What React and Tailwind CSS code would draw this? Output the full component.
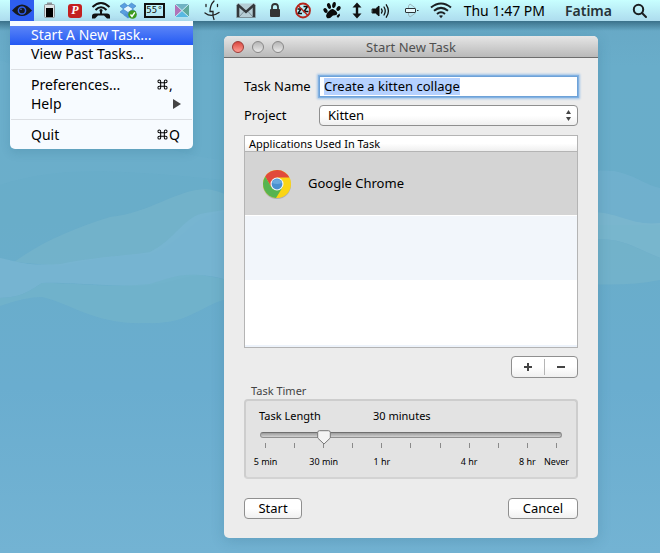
import React, { useState } from 'react'

const apps = ['Google Chrome']

const stops = [
    { tick: '5 min', text: '5 minutes' },
    { text: '15 minutes' },
    { tick: '30 min', text: '30 minutes' },
    { text: '45 minutes' },
    { tick: '1 hr', text: '1 hour' },
    { text: '2 hours' },
    { text: '3 hours' },
    { tick: '4 hr', text: '4 hours' },
    { text: '6 hours' },
    { tick: '8 hr', text: '8 hours' },
    { tick: 'Never', text: 'Never' },
]

const Wallpaper = () => (
    <svg className="absolute inset-0 -z-10 h-full w-full" viewBox="0 0 660 553" preserveAspectRatio="none" aria-hidden="true">
        <defs>
            <linearGradient id="sea" x1="0" y1="0" x2="0" y2="1">
                <stop offset="0" stopColor="#67a6c3" />
                <stop offset="0.12" stopColor="#69adca" />
                <stop offset="0.4" stopColor="#69adc9" />
                <stop offset="0.7" stopColor="#6aadcf" />
                <stop offset="1" stopColor="#73b3d3" />
            </linearGradient>
            <linearGradient id="barShadow" x1="0" y1="0" x2="0" y2="1">
                <stop offset="0" stopColor="#1d4d63" stopOpacity="0.6" />
                <stop offset="1" stopColor="#1d4d63" stopOpacity="0" />
            </linearGradient>
        </defs>
        <rect width="660" height="553" fill="url(#sea)" />
        {/* left of the window */}
        <path d="M14 262 C45 240 75 228 110 217 C150 213 175 190 206 189 Q216 190 230 196 L230 212 C190 212 190 240 150 254 C110 256 95 259 60 266 Z" fill="#76b3ca" opacity="0.7" />
        <path d="M0 258 C20 262 25 266 60 264 C100 256 125 256 150 252 C175 240 185 215 205 213 L230 209 L230 281 C185 266 180 287 130 286 C90 285 60 282 42 283 C25 294 20 297 0 298 Z" fill="#78b5d1" opacity="0.9" />
        <path d="M42 283 C80 283 110 288 150 284 C175 277 185 269 230 281 L230 298 C200 305 190 325 145 323 C95 325 70 303 42 297 Q25 297 0 306 L0 298 C20 297 25 294 42 283 Z" fill="#71b2cb" opacity="0.9" />
        <path d="M0 60 C60 80 120 150 224 160 L224 180 C120 170 60 165 0 185 Z" fill="#74b2d2" opacity="0.2" />
        {/* right of the window */}
        <path d="M590 172 C625 165 640 184 660 188 L660 225 L590 225 Z" fill="#74b3d0" opacity="0.6" />
        <path d="M590 212 C620 212 630 226 660 223 L660 258 C635 248 620 236 590 240 Z" fill="#7fb9cf" opacity="0.7" />
        <path d="M590 240 C620 236 635 248 660 258 L660 280 Q630 286 590 284 Z" fill="#76b3cb" opacity="0.7" />
        <rect y="21" width="660" height="10" fill="url(#barShadow)" />
    </svg>
)

const MenuIcons = () => (
    <div className="flex h-[21px] items-center">
        <button type="button" aria-label="Task menu" className="h-[21px] w-6 bg-[#2e5ef0]">
            <svg viewBox="0 0 24 21" className="h-[21px] w-6">
                <path d="M2 10.500 Q12 -1.500 22 10.500 Q12 21.500 2 10.500Z" fill="#16191f" />
                <circle cx="12" cy="10.500" r="3.600" fill="#16191f" stroke="#2e5ef0" strokeWidth="1.500" />
                <circle cx="11" cy="9.300" r="0.700" fill="#5f85f3" />
            </svg>
        </button>
        {/* battery */}
        <svg viewBox="0 0 31 21" className="h-[21px] w-[31px]">
            <rect x="13" y="2.500" width="5" height="2" fill="#8b9296" />
            <rect x="10.500" y="4.500" width="10" height="13" rx="1" fill="#dfe5e6" stroke="#8b9296" />
            <rect x="12" y="8" width="7" height="9" fill="#000" />
        </svg>
        <div className="flex w-5 justify-center">
            <span className="h-[14px] w-[14px] rounded-[3px] bg-[#c3201f] text-center font-['Liberation_Serif'] text-xs leading-[13px] font-bold text-white italic">P</span>
        </div>
        {/* broadcast */}
        <svg viewBox="0 0 32 21" className="h-[21px] w-8" fill="none" stroke="#111" strokeWidth="2">
            <path d="M7.500 7 Q16 -1 24.500 7" />
            <path d="M10.500 10 Q16 4.500 21.500 10" />
            <circle cx="16" cy="10.500" r="1.500" fill="#111" stroke="none" />
            <path d="M7 18.500V16Q7 13.500 10 13.500H22Q25 13.500 25 16V18.500H22L19 15.500H13L10 18.500Z" fill="#111" stroke="none" />
            <path d="M15 11H17V14H15Z" fill="#111" stroke="none" />
        </svg>
        {/* dropbox */}
        <svg viewBox="0 0 22 21" className="h-[21px] w-[22px]">
            <path d="M3 6 L7.500 3 L11 6 L6.500 9Z M11 6 L14.500 3 L19 6 L15.500 9Z M3 12 L6.500 9 L11 12 L7.500 15Z M11 12 L15.500 9 L19 12 L14.500 15Z" fill="#5a9fe0" stroke="#2f6fb5" strokeWidth="0.500" />
            <path d="M11 6 L15.500 9 L11 12 L6.500 9Z" fill="#e8f7ff" />
            <path d="M6.500 15 L11 12.500 L15.500 15 L11 18.500Z" fill="#4f93d6" />
            <circle cx="15.500" cy="14.500" r="4.300" fill="#3e9b1d" />
            <path d="M13.500 14.500 L15 16.500 L17.800 12.300" fill="none" stroke="#fff" strokeWidth="1.400" />
        </svg>
        <div className="flex w-[31px] justify-center">
            <span className="flex h-[15px] w-[21px] items-center justify-center border-2 border-[#111] font-['DejaVu_Sans_Mono'] text-[9px] leading-[11px] text-[#111]">55°</span>
        </div>
        {/* colour square */}
        <svg viewBox="0 0 24 21" className="h-[21px] w-6">
            <path d="M5 4H19L12 11Z" fill="#6fb3c4" />
            <path d="M5 4L12 11L5 17Z" fill="#b073b8" />
            <path d="M19 4V17L12 11Z" fill="#5fa99b" />
            <path d="M5 17L12 11L19 17Z" fill="#58b8e2" />
            <path d="M5 4L19 17M19 4L5 17" stroke="#c8e9f2" strokeWidth="1" />
        </svg>
        {/* smiling face */}
        <svg viewBox="0 0 36 21" className="h-[21px] w-9" fill="none" stroke="#222" strokeWidth="1.300" strokeLinecap="round">
            <path d="M20 1 Q16 5 16 11.500 H19 Q18.500 16 20 19.500" />
            <path d="M12 4.500V6.500M23.500 4.500V6.500" />
            <path d="M11 13 Q17.500 18 25 12.500" />
        </svg>
        {/* mail */}
        <svg viewBox="0 0 32 21" className="h-[21px] w-8">
            <path d="M6.500 3.500H25.500V17.500H6.500Z" fill="#b5cdd5" />
            <path d="M9 17L14 11.500M23 17L18 11.500" stroke="#7d9199" />
            <path d="M8 17.500V5" stroke="#33383b" strokeWidth="2.600" />
            <path d="M24 17.500V5" stroke="#33383b" strokeWidth="2.600" />
            <path d="M7.500 4.500L16 12L24.500 4.500" fill="none" stroke="#33383b" strokeWidth="2.400" />
            <path d="M6.500 17.500H25.500" stroke="#7d9199" />
        </svg>
        {/* lock */}
        <svg viewBox="0 0 27 21" className="h-[21px] w-[27px]">
            <path d="M10 10V7Q10 4 13 4Q16 4 16 7V10" fill="none" stroke="#333" strokeWidth="1.800" />
            <rect x="8" y="9" width="10" height="8" rx="1" fill="#333" />
        </svg>
        {/* no sleep */}
        <svg viewBox="0 0 28 21" className="h-[21px] w-7">
            <path d="M8.500 9H12L9 13.500H13M14.500 6.500H18.500L15 11.500H19.500" fill="none" stroke="#111" strokeWidth="1.500" />
            <circle cx="14" cy="10.500" r="7" fill="none" stroke="#b5251c" strokeWidth="1.800" />
            <path d="M9 5.500L19 15.500" stroke="#b5251c" strokeWidth="1.500" />
        </svg>
        {/* paw */}
        <svg viewBox="0 0 30 21" className="h-[21px] w-[30px]" fill="#0a0a0a">
            <path d="M9 16Q9 13 12 11Q15 7.500 17.500 10Q21 12 20 14.500Q18.500 15.500 16 15.500Q13 19 10 18Z" />
            <ellipse cx="8.500" cy="10.500" rx="1.800" ry="2.600" transform="rotate(-40 8.500 10.500)" />
            <ellipse cx="12" cy="6" rx="1.800" ry="3" transform="rotate(-20 12 6)" />
            <ellipse cx="17" cy="5" rx="1.800" ry="3" transform="rotate(10 17 5)" />
            <ellipse cx="21.500" cy="8.500" rx="1.800" ry="2.700" transform="rotate(40 21.500 8.500)" />
            <path d="M19.500 16L22.500 13.500L23 15.500L21 18Z" />
        </svg>
        {/* up and down */}
        <svg viewBox="0 0 20 21" className="h-[21px] w-5" fill="#111">
            <path d="M10 2.500L14.500 7.500H11.200V13.500H14.500L10 18.500L5.500 13.500H8.800V7.500H5.500Z" />
        </svg>
        {/* volume */}
        <svg viewBox="0 0 28 21" className="h-[21px] w-7" fill="none" stroke="#111" strokeWidth="1.300" strokeLinecap="round">
            <path d="M5.500 9H8.500L12 6V16L8.500 13H5.500Z" fill="#111" strokeWidth="1" />
            <path d="M14.500 9Q16 11 14.500 13M17 7Q19.500 11 17 15M19.300 4.800Q23.500 11 19.300 17.200" />
        </svg>
        {/* router */}
        <svg viewBox="0 0 32 21" className="h-[21px] w-8" fill="none">
            <path d="M13.500 8V6L15 4L20.500 8M13.500 13V15L15 17L20.500 13" stroke="#9db7bf" />
            <rect x="10.500" y="8.500" width="10" height="4" rx="0.500" fill="#e5f8fc" stroke="#2c3336" />
            <path d="M22 10.500H23.500" stroke="#2c3336" />
        </svg>
        {/* wifi */}
        <svg viewBox="0 0 28 21" className="h-[21px] w-7" fill="none" stroke="#1b1f21" strokeWidth="2">
            <path d="M4 7.500Q14 -.5 24 7.500M7 10.800Q14 5 21 10.800M10 14Q14 10.500 18 14" />
            <path d="M12 15.800L14 18.300L16 15.800Q14 14.500 12 15.800Z" fill="#1b1f21" stroke="none" />
        </svg>
    </div>
)

const MenuBar = () => (
    <header className="flex h-[21px] items-center justify-between overflow-hidden bg-linear-to-b from-[#c8ffff] to-[#addcee] pr-3 pl-[10px] text-sm whitespace-nowrap">
        <MenuIcons />
        <div className="flex items-center gap-5">
            <time>Thu 1:47 PM</time>
            <span className="font-semibold text-[#263238]">Fatima</span>
            <button type="button" aria-label="Search">
                <svg viewBox="0 0 16 16" className="h-4 w-4" fill="none" stroke="#1b1f21" strokeWidth="2" strokeLinecap="round">
                    <circle cx="6.500" cy="6.500" r="4.700" />
                    <path d="M10 10L14 14" />
                </svg>
            </button>
        </div>
    </header>
)

const MenuItem = ({ label, shortcut, submenu, active }) => (
    <li>
        <button
            type="button"
            className={
                active
                    ? 'flex h-[19px] w-full items-center justify-between bg-linear-to-b from-[#5b84f7] to-[#2358f3] pr-3 pb-[2px] pl-[21px] text-white'
                    : 'flex h-[19px] w-full items-center justify-between pr-3 pb-[2px] pl-[21px]'
            }
        >
            <span>{label}</span>
            {shortcut && (
                <span className="flex w-6 items-center">
                    <svg viewBox="0 0 12 12" className="mr-px h-[11px] w-[11px]" fill="none" stroke="currentColor" strokeWidth="1.100">
                        <path d="M4 4H8V8H4ZM4 4H2.500A1.500 1.500 0 1 1 4 2.500ZM8 4V2.500A1.500 1.500 0 1 1 9.500 4ZM8 8H9.500A1.500 1.500 0 1 1 8 9.500ZM4 8V9.500A1.500 1.500 0 1 1 2.500 8Z" />
                    </svg>
                    {shortcut}
                </span>
            )}
            {submenu && (
                <svg viewBox="0 0 8 10" className="h-[10px] w-2" fill="#444">
                    <path d="M0 0L8 5L0 10Z" />
                </svg>
            )}
        </button>
    </li>
)

const Separator = () => (
    <li className="flex h-3 items-start px-px pt-[5px]">
        <hr className="w-full border-[#dcdfe3]" />
    </li>
)

const TaskMenu = () => (
    <ul className="w-[183px] shrink-0 rounded-b-[5px] bg-[#f7fbff] pt-[5px] pb-1 text-sm leading-[19px] shadow-[0_4px_10px_rgba(30,80,110,0.15)]">
        <MenuItem label="Start A New Task..." active />
        <MenuItem label="View Past Tasks..." />
        <Separator />
        <MenuItem label="Preferences..." shortcut="," />
        <MenuItem label="Help" submenu />
        <Separator />
        <MenuItem label="Quit" shortcut="Q" />
    </ul>
)

const ChromeLogo = () => (
    <svg viewBox="0 0 30 30" className="h-[30px] w-[30px]">
        <ellipse cx="15" cy="16" rx="14" ry="14" fill="#8a8a8a" opacity="0.500" />
        <circle cx="15" cy="15" r="14" fill="#fbd514" />
        <path d="M15 8.500H27.400A14 14 0 0 0 3.200 7.500L9.400 18.250Z" fill="#e14a3b" />
        <path d="M3.200 7.500A14 14 0 0 0 14 28.960L20.600 18.250L9.400 18.250Z" fill="#56b450" />
        <circle cx="15" cy="15" r="6.500" fill="#f3f7f8" />
        <circle cx="15" cy="15" r="5.400" fill="#4a90cf" />
        <path d="M10 14A5.200 5.200 0 0 1 20 14Q15 16 10 14Z" fill="#6aa9de" />
    </svg>
)

const TitleBar = () => (
    <div className="grid h-[22px] grid-cols-[1fr_auto_1fr] items-center rounded-t-[5px] border-b border-[#6d6d6d] bg-linear-to-b from-[#e6e6e6] to-[#b9b9b9] px-2">
        <div className="flex gap-2">
            <button type="button" aria-label="Close" className="h-3 w-3 rounded-full border border-[#9b3a36] bg-linear-to-b from-[#d8453f] to-[#ff9d94]" />
            <button type="button" aria-label="Minimize" className="h-3 w-3 rounded-full border border-[#888] bg-linear-to-b from-[#b5b5b5] to-[#e9e9e9]" />
            <button type="button" aria-label="Zoom" className="h-3 w-3 rounded-full border border-[#888] bg-linear-to-b from-[#b5b5b5] to-[#e9e9e9]" />
        </div>
        <h1 className="text-[13px] leading-5 text-[#505050]">Start New Task</h1>
    </div>
)

const AppTable = () => (
    <div className="mt-[9px] h-[213px] border border-[#b4b4b4] bg-white">
        <table className="w-full border-separate border-spacing-0 text-left">
            <thead>
                <tr>
                    <th className="h-4 border-b border-[#b4b4b4] bg-linear-to-b from-white from-50% to-[#efefef] p-0 pl-1 text-[11px] leading-[15px] font-normal">
                        Applications Used In Task
                    </th>
                </tr>
            </thead>
            <tbody>
                {apps.map((app) => (
                    <tr key={app} className="bg-[#d4d4d4]">
                        <td className="h-[63px] p-0 pl-[17px]">
                            <div className="flex items-center gap-4 text-[13px]">
                                <ChromeLogo />
                                {app}
                            </div>
                        </td>
                    </tr>
                ))}
                <tr className="bg-[#f2f6fb]">
                    <td className="h-[65px] border-t border-white p-0" />
                </tr>
                <tr className="bg-white">
                    <td className="h-[65px] p-0" />
                </tr>
                <tr className="bg-[#edf3fb]">
                    <td className="h-[2px] p-0" />
                </tr>
            </tbody>
        </table>
    </div>
)

const TaskTimer = () => {
    const [step, setStep] = useState(2)

    return (
        <section className="mt-1">
            <h2 className="pl-[7px] text-[11px] leading-[17px] text-[#444]">Task Timer</h2>
            <div className="h-20 rounded-[4px] border-2 border-[#cdcdcd] border-b-[#d3d3d3] bg-[#e3e3e3] pt-[6px]">
                <div className="grid grid-cols-[114px_1fr] px-[13px] text-[11px] leading-[17px]">
                    <label htmlFor="length">Task Length</label>
                    <output htmlFor="length">{stops[step].text}</output>
                </div>
                <div className="relative mx-[14px] mt-2 h-[6px] rounded-full border border-[#909090] border-t-[#6f6f6f] bg-linear-to-b from-[#9c9c9c] to-[#d2d2d2]">
                    <div className="absolute inset-x-[5px] -top-[3px]">
                        <svg
                            viewBox="0 0 14 15"
                            className="absolute h-[15px] w-[14px] -translate-x-1/2"
                            style={{ left: `${(step / (stops.length - 1)) * 100}%` }}
                        >
                            <path d="M2.500 0.700H11.500Q13.300 0.700 13.300 2.500V8L7 14L0.700 8V2.500Q0.700 0.700 2.500 0.700Z" fill="#f4f4f4" stroke="#777" />
                        </svg>
                    </div>
                    <input
                        id="length"
                        type="range"
                        min="0"
                        max={stops.length - 1}
                        value={step}
                        onChange={(e) => setStep(Number(e.target.value))}
                        className="absolute inset-x-0 -top-1 h-4 w-full opacity-0"
                    />
                </div>
                <div className="mt-[5px] grid grid-cols-11 px-[5px]">
                    {stops.map((stop) => (
                        <div key={stop.text} className="flex flex-col items-center">
                            <span className="h-[5px] w-px bg-[#8a8a8a]" />
                            <span className="mt-[5px] w-0 text-[9px] leading-[18px]">
                                <span className="flex justify-center whitespace-nowrap">{stop.tick}</span>
                            </span>
                        </div>
                    ))}
                </div>
            </div>
        </section>
    )
}

const TaskWindow = () => (
    <main className="mt-[15px] min-w-0 flex-1 rounded-[5px] bg-[#ececec] shadow-[0_3px_14px_rgba(30,80,110,0.2)]">
        <TitleBar />
        <form className="px-5 pt-[18px] pb-[19px]" onSubmit={(e) => e.preventDefault()}>
            <div className="grid grid-cols-[75px_1fr] items-center gap-y-2 text-[13px]">
                <label htmlFor="name">Task Name</label>
                <div className="flex h-[21px] items-center border border-[#6ea2d8] bg-white shadow-[0_0_0_1px_#83b2e2,0_0_2px_2px_#a0c4e8]">
                    <input
                        id="name"
                        defaultValue="Create a kitten collage"
                        className="ml-1 field-sizing-content h-[17px] max-w-full bg-[#b5d1ff] outline-none"
                    />
                </div>
                <label htmlFor="project">Project</label>
                <div className="relative">
                    <select
                        id="project"
                        className="block h-[21px] w-full appearance-none rounded-[4px] border border-[#8f8f8f] bg-linear-to-b from-white from-50% to-[#f0f0f0] pl-2 leading-[19px]"
                    >
                        <option>Kitten</option>
                    </select>
                    <svg viewBox="0 0 5 11" className="pointer-events-none absolute top-[5px] right-[7px] h-[11px] w-[5px]" fill="#444">
                        <path d="M2.500 0L5 4H0ZM2.500 11L5 7H0Z" />
                    </svg>
                </div>
            </div>
            <AppTable />
            <div className="mt-2 flex justify-end">
                <div className="flex h-[22px] w-[67px] items-center divide-x divide-[#b5b5b5] rounded-[4px] border border-[#8f8f8f] bg-linear-to-b from-white from-50% to-[#f0f0f0]">
                    <button type="button" aria-label="Add" className="flex h-4 flex-1 items-center justify-center">
                        <svg viewBox="0 0 8 8" className="h-2 w-2" stroke="#444" strokeWidth="2">
                            <path d="M0 4H8M4 0V8" />
                        </svg>
                    </button>
                    <button type="button" aria-label="Remove" className="flex h-4 flex-1 items-center justify-center">
                        <svg viewBox="0 0 8 8" className="h-2 w-2" stroke="#444" strokeWidth="2">
                            <path d="M0 4H8" />
                        </svg>
                    </button>
                </div>
            </div>
            <TaskTimer />
            <div className="mt-[19px] flex justify-between text-[13px] leading-[19px]">
                <button type="submit" className="w-[58px] rounded-[4px] border border-[#8f8f8f] bg-linear-to-b from-white from-50% to-[#f0f0f0]">Start</button>
                <button type="button" className="w-[70px] rounded-[4px] border border-[#8f8f8f] bg-linear-to-b from-white from-50% to-[#f0f0f0]">Cancel</button>
            </div>
        </form>
    </main>
)

const App = () => (
    <div className="relative isolate min-h-screen font-['Noto_Sans',sans-serif] text-black">
        <Wallpaper />
        <MenuBar />
        <div className="flex items-start gap-[31px] pr-[62px] pl-[10px]">
            <TaskMenu />
            <TaskWindow />
        </div>
    </div>
)

export default App
